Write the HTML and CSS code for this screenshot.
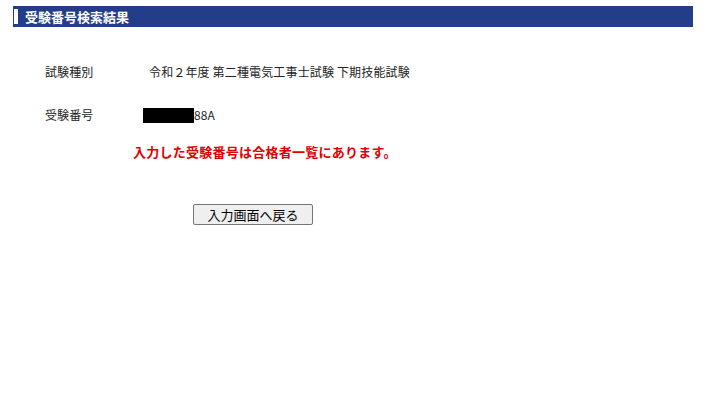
FILE: index.html
```html
<!DOCTYPE html>
<html lang="ja">
<head>
    <meta charset="UTF-8">
    <meta name="viewport" content="width=device-width, initial-scale=1.0">
    <title>受験番号検索結果</title>
    <link rel="stylesheet" href="styles.css">
</head>
<body>
    <div class="title-bar">
        <span class="title-mark"></span>
        <h1>受験番号検索結果</h1>
    </div>
    <div class="result">
        <div class="row">
            <div class="label">試験種別</div>
            <div class="value">令和２年度 第二種電気工事士試験 下期技能試験</div>
        </div>
        <div class="row">
            <div class="label">受験番号</div>
            <div class="value"><span class="mask"></span>88A</div>
        </div>
        <p class="message">入力した受験番号は合格者一覧にあります。</p>
        <div class="actions">
            <button type="button" onclick="history.back()">入力画面へ戻る</button>
        </div>
    </div>
</body>
</html>
```

FILE: styles.css
```css
body {
    margin: 0;
    font-family: "Noto Sans CJK JP", "Noto Sans", sans-serif;
    font-size: 12px;
    color: #222;
    background: #fff;
}
.title-bar {
    display: flex;
    align-items: center;
    margin: 6px 15px 0 13px;
    height: 21px;
    padding-left: 1px;
    background-color: #243d89;
}
.title-mark {
    width: 4px;
    height: 15px;
    background-color: #fff;
}
.title-bar h1 {
    margin: 0 0 0 7px;
    font-size: 13px;
    font-weight: bold;
    line-height: 21px;
    color: #fff;
}
.result {
    padding: 35px 0 0 45px;
}
.row {
    display: flex;
    align-items: center;
    height: 20px;
    line-height: 20px;
    margin-bottom: 23px;
}
.label {
    width: 104px;
    letter-spacing: 0.1px;
}
.value {
    display: flex;
    align-items: center;
    letter-spacing: 0.15px;
}
.mask {
    display: inline-block;
    width: 51px;
    height: 15px;
    margin-left: -6px;
    background-color: #000;
}
.message {
    margin: -6px 0 0 88px;
    line-height: 20px;
    font-size: 13px;
    font-weight: bold;
    letter-spacing: 0.25px;
    color: #e00000;
}
.actions {
    padding: 42px 0 0 148px;
}
.actions button {
    width: 120px;
    height: 21px;
    padding: 0;
    font-family: "Noto Sans CJK JP", sans-serif;
    font-size: 13px;
    line-height: 19px;
    color: #000;
    background-color: #efefef;
    border: 1px solid #767676;
    border-radius: 2px;
}
```
